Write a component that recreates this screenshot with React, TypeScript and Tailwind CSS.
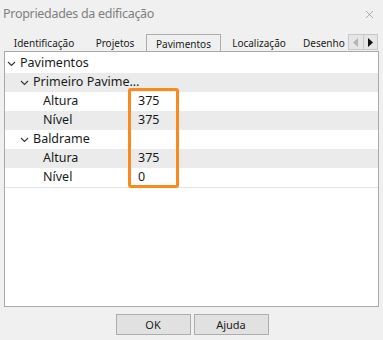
import { X } from "lucide-react";

const font = { fontFamily: '"Noto Sans", "Segoe UI", sans-serif' };

const Chevron = () => (
    <svg width="9" height="6" viewBox="0 0 9 6" className="shrink-0">
        <path d="M1 1 L4.5 4.5 L8 1" fill="none" stroke="#333" strokeWidth="1.1" />
    </svg>
);

type Row = { label: string; level: number; value?: string; group?: boolean; gray?: boolean };

const rows: Row[] = [
    { label: "Pavimentos", level: 0, group: true },
    { label: "Primeiro Pavime…", level: 1, group: true, gray: true },
    { label: "Altura", level: 2, value: "375" },
    { label: "Nível", level: 2, value: "375", gray: true },
    { label: "Baldrame", level: 1, group: true },
    { label: "Altura", level: 2, value: "375", gray: true },
    { label: "Nível", level: 2, value: "0" },
];

const tabs = [
    { name: "Identificação", w: "w-[80px] justify-center" },
    { name: "Projetos", w: "w-[62px] justify-center" },
    { name: "Pavimentos", w: "w-[75px] justify-center", active: true },
    { name: "Localização", w: "w-[76px] justify-center" },
    { name: "Desenho", w: "w-[61px] justify-start pl-[6px]" },
];

const App = () => {
    return (
        <div className="w-[383px] h-[340px] bg-[#f0f0f0] flex flex-col overflow-hidden text-[#1a1a1a]" style={font}>
            {/* Title bar */}
            <div className="h-[28px] flex items-center justify-between pl-[3px] pr-[7px] shrink-0">
                <span className="text-[12.5px] tracking-[-0.3px] text-[#7f7f7f] leading-none">Propriedades da edificação</span>
                <X className="w-[13px] h-[13px] text-[#7f7f7f]" strokeWidth={1.1} />
            </div>

            {/* Tabs */}
            <div className="h-[23px] flex items-end pl-[4px] pr-[5px] shrink-0">
                <div className="flex w-[344px] overflow-hidden h-[18px] items-end">
                    {tabs.map((t) => (
                        <div key={t.name}
                            className={`${t.w} shrink-0 flex items-center text-[10px] leading-none ${t.active ? "bg-[#f0f0f0] border border-b-0 border-[#adadad] relative top-[1px] h-[18px] z-10" : "h-[17px]"}`}>
                            {t.name}
                        </div>
                    ))}
                </div>
                <div className="flex w-[30px] h-[16px] mb-[1px] border border-[#c8c8c8] bg-[#e6e6e6]">
                    <div className="flex-1 flex items-center justify-center border-r border-[#c8c8c8]">
                        <svg width="5" height="9" viewBox="0 0 5 9"><path d="M5 0 L0 4.5 L5 9 Z" fill="#b4b4b4" /></svg>
                    </div>
                    <div className="flex-1 flex items-center justify-center">
                        <svg width="5" height="9" viewBox="0 0 5 9"><path d="M0 0 L5 4.5 L0 9 Z" fill="#111" /></svg>
                    </div>
                </div>
            </div>

            {/* Panel */}
            <div className="relative mx-[4px] h-[256px] border border-[#a9a9a9] bg-white shrink-0">
                <div className="pt-[2px] flex flex-col border-b border-[#e3e3e3]">
                    {rows.map((r, i) => (
                        <div key={i} className={`h-[19px] flex items-center text-[12.5px] leading-none ${r.gray ? "bg-[#ebebeb]" : ""}`}>
                            <div className={`flex items-center gap-[4px] w-[129px] shrink-0 ${r.level === 0 ? "pl-[2px]" : r.level === 1 ? "pl-[15px]" : "pl-[38px]"}`}>
                                {r.group && <Chevron />}
                                <span className="whitespace-nowrap">{r.label}</span>
                            </div>
                            {r.value && <span className="pl-[4px]">{r.value}</span>}
                        </div>
                    ))}
                </div>
                {/* Highlight */}
                <div className="absolute left-[123px] top-[36px] w-[51px] h-[100px] border-[3px] border-[#fb8a1e] rounded-[3px]" />
            </div>

            {/* Buttons */}
            <div className="flex justify-center gap-[3px] mt-[7px] pl-[1px]">
                <button className="w-[75px] h-[21px] border border-[#adadad] bg-[#e1e1e1] text-[11px] leading-none">OK</button>
                <button className="w-[75px] h-[21px] border border-[#adadad] bg-[#e1e1e1] text-[11px] leading-none">Ajuda</button>
            </div>
        </div>
    );
};

export default App;
